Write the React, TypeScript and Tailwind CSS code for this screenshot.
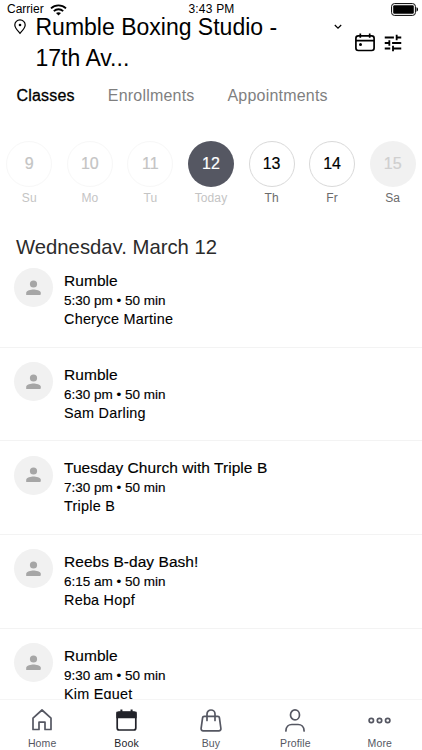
import React from 'react';
import { MdTune } from 'react-icons/md';

interface Day {
  date: number;
  label: string;
  circle: string;
  text: string;
}

const days: Day[] = [
  { date: 9, label: 'Su', circle: 'border border-[#f7f7f7] text-[#c4c4c4]', text: 'text-[#c4c4c4]' },
  { date: 10, label: 'Mo', circle: 'border border-[#f7f7f7] text-[#c4c4c4]', text: 'text-[#c4c4c4]' },
  { date: 11, label: 'Tu', circle: 'border border-[#f7f7f7] text-[#c4c4c4]', text: 'text-[#c4c4c4]' },
  { date: 12, label: 'Today', circle: 'bg-[#555762] text-white', text: 'text-[#c4c4c4]' },
  { date: 13, label: 'Th', circle: 'border border-[#d9d9d9] text-black', text: 'text-[#6b6b6b]' },
  { date: 14, label: 'Fr', circle: 'border border-[#d9d9d9] text-black', text: 'text-[#6b6b6b]' },
  { date: 15, label: 'Sa', circle: 'bg-[#f1f1f1] text-[#cfcfcf]', text: 'text-[#6b6b6b]' },
];

const classes = [
  { name: 'Rumble', time: '5:30 pm • 50 min', staff: 'Cheryce Martine' },
  { name: 'Rumble', time: '6:30 pm • 50 min', staff: 'Sam Darling' },
  { name: 'Tuesday Church with Triple B', time: '7:30 pm • 50 min', staff: 'Triple B' },
  { name: 'Reebs B-day Bash!', time: '6:15 am • 50 min', staff: 'Reba Hopf' },
  { name: 'Rumble', time: '9:30 am • 50 min', staff: 'Kim Eguet' },
];

const StatusBar: React.FC = () => (
  <div className="flex h-[16px] shrink-0 items-center justify-between pt-[3px] pl-[7px] pr-[3px] text-[12px] leading-[13px]">
    <div className="flex flex-1 items-center gap-[6px]">
      <span>Carrier</span>
      <svg width="17" height="12" viewBox="0 0 17 12" fill="none" stroke="#000" strokeWidth="1.8">
        <path d="M1 4.400C5.200.300 11.800.300 16 4.400" />
        <path d="M3.800 7.100c2.700-2.500 6.700-2.500 9.400 0" />
        <path d="M6 9.100c1.500-1.300 3.500-1.300 5 0L8.500 11.600z" fill="#000" stroke="none" />
      </svg>
    </div>
    <span className="-ml-[3px] tracking-[0.2px]">3:43 PM</span>
    <div className="flex flex-1 justify-end">
      <svg width="28" height="13" viewBox="0 0 28 13">
        <rect x=".6" y=".6" width="23.800" height="11.800" rx="2.800" fill="none" stroke="#000" strokeWidth="1" />
        <rect x="2.200" y="2.200" width="20.600" height="8.600" rx="1.200" fill="#000" />
        <path d="M25.500 4.300c2 .5 2 3.900 0 4.400z" fill="#000" />
      </svg>
    </div>
  </div>
);

const Header: React.FC = () => (
  <header className="-mt-[4px] flex shrink-0 items-start pl-[14px] text-black">
    <svg width="12" height="16" viewBox="0 0 12 16" className="mt-[7px] shrink-0" fill="none" stroke="#000" strokeWidth="1.2">
      <path d="M6 14.300C3.500 11.500.8 9 .8 6a5.200 5.200 0 0 1 10.400 0C11.200 9 8.500 11.500 6 14.300z" />
      <circle cx="6" cy="6" r="1.300" fill="#000" stroke="none" />
    </svg>
    <h1 className="ml-[9.5px] w-[289.5px] text-[23px] leading-[30.5px]">
      Rumble Boxing Studio -<br />17th Av...
    </h1>
    <svg width="8" height="6" viewBox="0 0 8 6" className="mt-[11.5px] ml-[9px] shrink-0" fill="none" stroke="#000" strokeWidth="1.2">
      <path d="M.8 1 4 4.200 7.200 1" />
    </svg>
    <svg width="20" height="19" viewBox="0 0 20 19" className="mt-[21px] ml-[13px] shrink-0" fill="none" stroke="#000" strokeWidth="1.7">
      <rect x=".9" y="2.900" width="18.200" height="14.600" rx="2.400" />
      <path d="M1 7.700h18M5.300.4v4.400M14.700.4v4.400" />
      <circle cx="5.500" cy="11.600" r="1.500" fill="#000" stroke="none" />
    </svg>
    <MdTune className="mt-[19.5px] ml-[7px] size-[22px] shrink-0" />
  </header>
);

const Tabs: React.FC = () => (
  <nav className="mt-[11.4px] flex shrink-0 gap-[33px] pl-[16.5px] text-[16px] leading-6 tracking-[0.2px] text-[#7f7f7f]">
    <span className="text-black [-webkit-text-stroke:0.3px_black]">Classes</span>
    <span>Enrollments</span>
    <span>Appointments</span>
  </nav>
);

const WeekStrip: React.FC = () => (
  <div className="-mx-px mt-[32.6px] grid shrink-0 grid-cols-7">
    {days.map(day => (
      <div key={day.date} className="flex flex-col items-center">
        <div className={`flex size-[46px] items-center justify-center rounded-full pt-px text-[16px] [-webkit-text-stroke:0.2px] ${day.circle}`}>
          {day.date}
        </div>
        <span className={`mt-[3.5px] text-[12px] leading-4 tracking-[0.1px] ${day.text}`}>{day.label}</span>
      </div>
    ))}
  </div>
);

const Avatar: React.FC = () => (
  <div className="mt-[14.5px] flex size-[39px] shrink-0 items-center justify-center rounded-full bg-[#f1f1f1]">
    <svg width="15" height="16" viewBox="0 0 15 16" fill="#a6a6a6">
      <circle cx="7.500" cy="4" r="3.600" />
      <path d="M.2 15v-2.200c0-2.400 4.900-3.400 7.300-3.400s7.300 1 7.300 3.400V14a1 1 0 0 1-1 1z" />
    </svg>
  </div>
);

const ClassList: React.FC = () => (
  <ul className="min-h-0 flex-1 overflow-hidden text-black">
    {classes.map(item => (
      <li key={item.time} className="flex h-[93.7px] gap-[11px] border-b border-[#f3f3f3] pl-[14px]">
        <Avatar />
        <div className="pt-[17px]">
          <p className="text-[15.5px] leading-5 tracking-[0.05px] [-webkit-text-stroke:0.15px]">{item.name}</p>
          <p className="text-[13.5px] leading-[19px] [-webkit-text-stroke:0.15px]">{item.time}</p>
          <p className="text-[14.4px] leading-[19px] tracking-[0.24px] [-webkit-text-stroke:0.1px]">{item.staff}</p>
        </div>
      </li>
    ))}
  </ul>
);

const HomeIcon = () => (
  <svg width="20" height="22" viewBox="0 0 20 22" fill="none" stroke="#555762" strokeWidth="1.7" strokeLinejoin="round">
    <path d="M10 1 1 9.200v11.300h6v-7.300h6v7.300h6V9.200z" />
  </svg>
);

const BookIcon = () => (
  <svg width="21" height="22" viewBox="0 0 21 22" fill="none" stroke="#22232a" strokeWidth="1.7">
    <rect x="1.200" y="3" width="18.600" height="18" rx="2" />
    <path d="M1.200 3.500h18.600v5H1.200z" fill="#22232a" />
    <path d="M5.400.6v4M15.600.6v4" strokeWidth="2" />
  </svg>
);

const BuyIcon = () => (
  <svg width="22" height="23" viewBox="0 0 22 23" fill="none" stroke="#555762" strokeWidth="1.7" strokeLinecap="round" strokeLinejoin="round">
    <path d="M4.200 7.300h13.600a1.600 1.600 0 0 1 1.600 1.400l1.500 10.800a2 2 0 0 1-2 2.300H3.100a2 2 0 0 1-2-2.300L2.600 8.700a1.600 1.600 0 0 1 1.600-1.400z" />
    <path d="M7 11.500V5a4 4 0 0 1 8 0v6.500" />
  </svg>
);

const ProfileIcon = () => (
  <svg width="20" height="23" viewBox="0 0 20 23" fill="none" stroke="#555762" strokeWidth="1.7" strokeLinecap="round">
    <ellipse cx="10" cy="5.900" rx="4.500" ry="5" />
    <path d="M.9 22c0-4.200 2.900-6.500 6-6.500h6.200c3.100 0 6 2.300 6 6.500" />
  </svg>
);

const MoreIcon = () => (
  <svg width="23" height="7" viewBox="0 0 23 7" fill="none" stroke="#555762" strokeWidth="1.7">
    <circle cx="3.300" cy="3.500" r="2.200" />
    <circle cx="11.500" cy="3.500" r="2.200" />
    <circle cx="19.700" cy="3.500" r="2.200" />
  </svg>
);

const navItems = [
  { label: 'Home', icon: <HomeIcon />, active: false },
  { label: 'Book', icon: <BookIcon />, active: true },
  { label: 'Buy', icon: <BuyIcon />, active: false },
  { label: 'Profile', icon: <ProfileIcon />, active: false },
  { label: 'More', icon: <MoreIcon />, active: false },
];

const BottomNav: React.FC = () => (
  <nav className="grid h-[51px] shrink-0 grid-cols-5 border-t border-[#f5f5f5] bg-white">
    {navItems.map(item => (
      <div key={item.label} className="flex flex-col items-center pt-[7.5px]">
        <div className="flex h-[25px] items-center">{item.icon}</div>
        <span className={`mt-[4px] text-[10.5px] leading-[13px] tracking-[0.15px] ${item.active ? 'text-[#22232a]' : 'text-[#555762]'}`}>
          {item.label}
        </span>
      </div>
    ))}
  </nav>
);

const App: React.FC = () => {
  return (
    <div className="flex h-screen w-full flex-col overflow-hidden bg-white font-['Liberation_Sans',Arial,sans-serif] text-black">
      <StatusBar />
      <Header />
      <Tabs />
      <WeekStrip />
      <h2 className="mt-[29.4px] h-[18px] shrink-0 overflow-hidden pl-[16px] text-[20.3px] leading-[22px] text-[#2b2b2b]">
        Wednesday, March 12
      </h2>
      <ClassList />
      <BottomNav />
    </div>
  );
};

export default App;
